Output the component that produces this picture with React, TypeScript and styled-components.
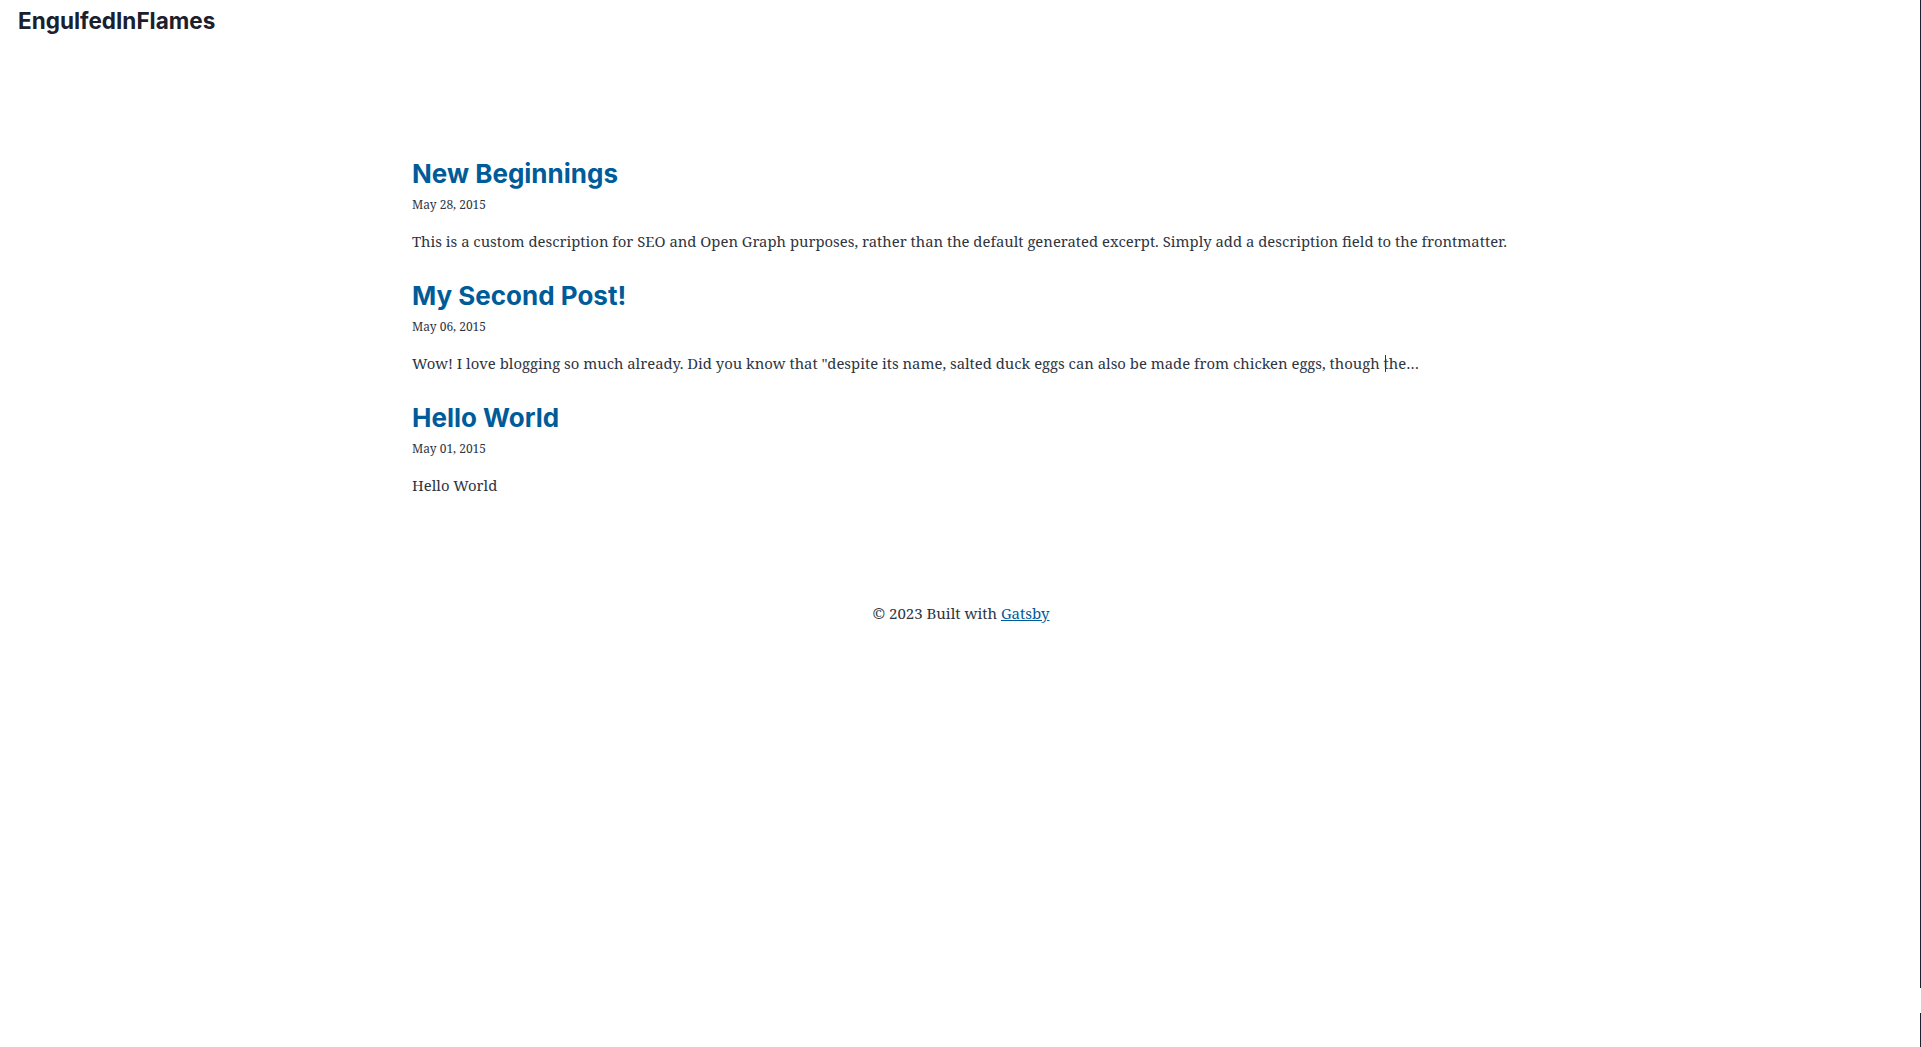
import React from "react";
import styled, { createGlobalStyle } from "styled-components";

const GlobalStyle = createGlobalStyle`
  html, body {
    margin: 0;
    padding: 0;
    background: #ffffff;
  }
  body {
    font-family: "Noto Serif", "DejaVu Serif", Georgia, serif;
    font-size: 15px;
    line-height: 24px;
    color: #2e353f;
  }
  * { box-sizing: border-box; }
`;

const Page = styled.div`
  min-height: 1047px;
  display: flex;
  flex-direction: column;
`;

const TopBar = styled.header`
  display: flex;
  align-items: center;
  padding: 7px 18px 0;
`;

const SiteTitle = styled.a`
  font-family: Inter, "Open Sans", sans-serif;
  font-weight: 700;
  font-size: 22.5px;
  line-height: 28px;
  color: #1a202c;
  text-decoration: none;
`;

const Main = styled.main`
  width: 100%;
  max-width: 1099px;
  margin: 0 auto;
  padding: 123px 0 0 1px;
`;

const PostList = styled.ol`
  list-style: none;
  margin: 0;
  padding: 0;
  display: flex;
  flex-direction: column;
  gap: 27px;
`;

const PostItem = styled.li`
  margin: 0;
  padding: 0;
`;

const PostHeader = styled.header`
  display: flex;
  flex-direction: column;
  align-items: flex-start;
  margin-bottom: 15px;
`;

const PostTitle = styled.h2`
  margin: 0 0 6px;
  font-family: Inter, "Open Sans", sans-serif;
  font-weight: 700;
  font-size: 26px;
  line-height: 32px;
  color: #005b99;
`;

const TitleLink = styled.a`
  color: inherit;
  text-decoration: none;
`;

const PostDate = styled.small`
  display: block;
  font-size: 12px;
  line-height: 18px;
  color: #2e353f;
`;

const Excerpt = styled.p`
  margin: 0;
  font-size: 14.85px;
  line-height: 24px;
  color: #2e353f;
`;

const Footer = styled.footer`
  margin-top: 104px;
  text-align: center;
  font-size: 15px;
  line-height: 24px;
  color: #2e353f;
`;

const FooterLink = styled.a`
  color: #005b99;
  text-decoration: underline;
`;

const EdgeLine = styled.div<{ $top: number; $height: number }>`
  position: fixed;
  right: 0;
  top: ${(p) => p.$top}px;
  width: 1px;
  height: ${(p) => p.$height}px;
  background: #1d2030;
`;

const Caret = styled.span`
  position: fixed;
  left: 1385px;
  top: 355px;
  width: 1px;
  height: 17px;
  background: #2e353f;
`;

const posts = [
  {
    title: "New Beginnings",
    date: "May 28, 2015",
    excerpt:
      "This is a custom description for SEO and Open Graph purposes, rather than the default generated excerpt. Simply add a description field to the frontmatter.",
  },
  {
    title: "My Second Post!",
    date: "May 06, 2015",
    excerpt:
      "Wow! I love blogging so much already. Did you know that \"despite its name, salted duck eggs can also be made from chicken eggs, though the…",
  },
  {
    title: "Hello World",
    date: "May 01, 2015",
    excerpt: "Hello World",
  },
];

export default function App() {
  return (
    <>
      <GlobalStyle />
      <Page>
        <TopBar>
          <SiteTitle href="#">EngulfedInFlames</SiteTitle>
        </TopBar>
        <Main>
          <PostList>
            {posts.map((p) => (
              <PostItem key={p.title}>
                <article>
                  <PostHeader>
                    <PostTitle>
                      <TitleLink href="#">{p.title}</TitleLink>
                    </PostTitle>
                    <PostDate>{p.date}</PostDate>
                  </PostHeader>
                  <section>
                    <Excerpt>{p.excerpt}</Excerpt>
                  </section>
                </article>
              </PostItem>
            ))}
          </PostList>
          <Footer>
            © 2023 Built with <FooterLink href="#">Gatsby</FooterLink>
          </Footer>
        </Main>
      </Page>
      <Caret />
      <EdgeLine $top={0} $height={988} />
      <EdgeLine $top={1013} $height={34} />
    </>
  );
}
